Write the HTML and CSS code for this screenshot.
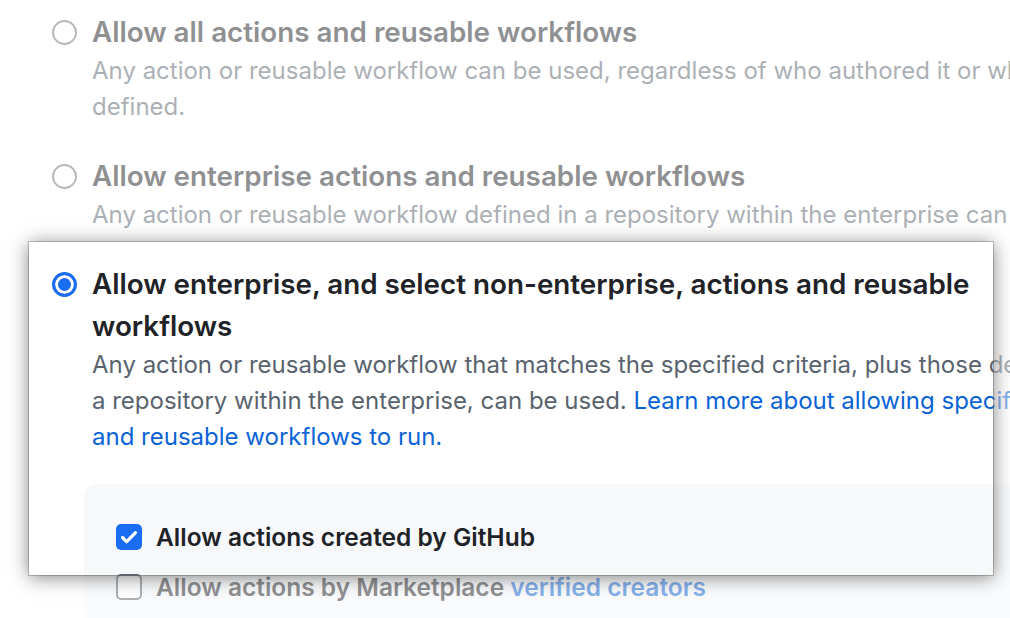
FILE: index.html
```html
<!DOCTYPE html>
<html lang="en">
<head>
<meta charset="utf-8">
<title>Actions permissions</title>
<link rel="stylesheet" href="styles.css">
</head>
<body>
<div class="page">
  <div class="stack faded">
    <div class="option">
      <span class="radio"></span>
      <div class="text">
        <div class="title">Allow all actions and reusable workflows</div>
        <div class="desc">Any action or reusable workflow can be used, regardless of who authored it or where it is<br>defined.</div>
      </div>
    </div>
    <div class="option">
      <span class="radio"></span>
      <div class="text">
        <div class="title">Allow enterprise actions and reusable workflows</div>
        <div class="desc">Any action or reusable workflow defined in a repository within the enterprise can be used.</div>
      </div>
    </div>
    <div class="option">
      <span class="radio checked"></span>
      <div class="text">
        <div class="title">Allow enterprise, and select non-enterprise, actions and reusable workflows</div>
        <div class="desc">Any action or reusable workflow that matches the specified criteria, plus those defined in<br>a repository within the enterprise, can be used. <a href="#">Learn more about allowing specific actions<br>and reusable workflows to run.</a></div>
      </div>
    </div>
    <div class="panel">
      <div class="row"><span class="check on"><svg viewBox="0 0 26 26" width="26" height="26"><path d="M6.5 13.5l4.2 4.2 8.8-9" fill="none" stroke="#fff" stroke-width="3.2" stroke-linecap="round" stroke-linejoin="round"/></svg></span><span class="label">Allow actions created by GitHub</span></div>
      <div class="row"><span class="check"></span><span class="label">Allow actions by Marketplace <a href="#">verified creators</a></span></div>
    </div>
  </div>

  <div class="spotlight">
    <div class="spot-inner">
      <div class="option">
        <span class="radio checked"></span>
        <div class="text">
          <div class="title">Allow enterprise, and select non-enterprise, actions and reusable workflows</div>
          <div class="desc">Any action or reusable workflow that matches the specified criteria, plus those defined in<br>a repository within the enterprise, can be used. <a href="#">Learn more about allowing specific actions<br>and reusable workflows to run.</a></div>
        </div>
      </div>
      <div class="panel">
        <div class="row"><span class="check on"><svg viewBox="0 0 26 26" width="26" height="26"><path d="M6.5 13.5l4.2 4.2 8.8-9" fill="none" stroke="#fff" stroke-width="3.2" stroke-linecap="round" stroke-linejoin="round"/></svg></span><span class="label">Allow actions created by GitHub</span></div>
        <div class="row"><span class="check"></span><span class="label">Allow actions by Marketplace <a href="#">verified creators</a></span></div>
      </div>
    </div>
  </div>
</div>
</body>
</html>
```

FILE: styles.css
```css
html, body {
  margin: 0;
  background: #fff;
  overflow: hidden;
}
body {
  font-family: Inter, "Noto Sans", "Liberation Sans", sans-serif;
  -webkit-font-smoothing: antialiased;
}
.page {
  position: relative;
  width: 1010px;
  height: 618px;
  overflow: hidden;
}
.stack {
  display: flex;
  flex-direction: column;
  gap: 30px;
  padding: 11px 0 0 52px;
}
.faded {
  opacity: 0.5;
}
.option {
  display: flex;
  align-items: flex-start;
  gap: 15px;
}
.radio {
  flex: none;
  box-sizing: border-box;
  width: 25px;
  height: 25px;
  margin-top: 9px;
  border-radius: 50%;
  border: 2px solid #6e7781;
  background: #fff;
}
.radio.checked {
  border: 3px solid #1a6cf0;
  background: #1a6cf0;
  box-shadow: inset 0 0 0 3px #fff;
}
.text {
  width: 1200px;
  flex: none;
}
.title {
  width: 1000px;
  font-size: 27.8px;
  line-height: 42px;
  font-weight: 600;
  color: #1f2328;
}
.desc {
  font-size: 24px;
  line-height: 36px;
  color: #59636e;
  white-space: nowrap;
}
a {
  color: #0b63d6;
  text-decoration: none;
}
.panel {
  margin: -1px 0 0 32px;
  width: 1100px;
  height: 300px;
  box-sizing: border-box;
  padding: 40px 32px;
  background: #f6f8fa;
  border-radius: 12px;
  display: flex;
  flex-direction: column;
  gap: 24px;
}
.row {
  display: flex;
  align-items: center;
  gap: 14px;
  height: 26px;
}
.check {
  flex: none;
  box-sizing: border-box;
  width: 26px;
  height: 26px;
  border-radius: 5px;
  border: 2px solid #59636e;
  background: #fff;
}
.check.on {
  border: none;
  background: #1a6cf0;
}
.check svg {
  display: block;
}
.label {
  font-size: 24.5px;
  font-weight: 600;
  color: #1f2328;
  white-space: nowrap;
}
.spotlight {
  position: absolute;
  left: 29px;
  top: 242px;
  width: 964px;
  height: 333px;
  overflow: hidden;
  background: #fff;
  box-shadow: 0 0 0 1px rgba(0, 0, 0, 0.2), 0 2px 18px rgba(0, 0, 0, 0.5);
}
.spot-inner {
  padding: 21px 0 0 23px;
  display: flex;
  flex-direction: column;
  gap: 29px;
}
.spot-inner .panel {
  margin-top: 0;
}
```
